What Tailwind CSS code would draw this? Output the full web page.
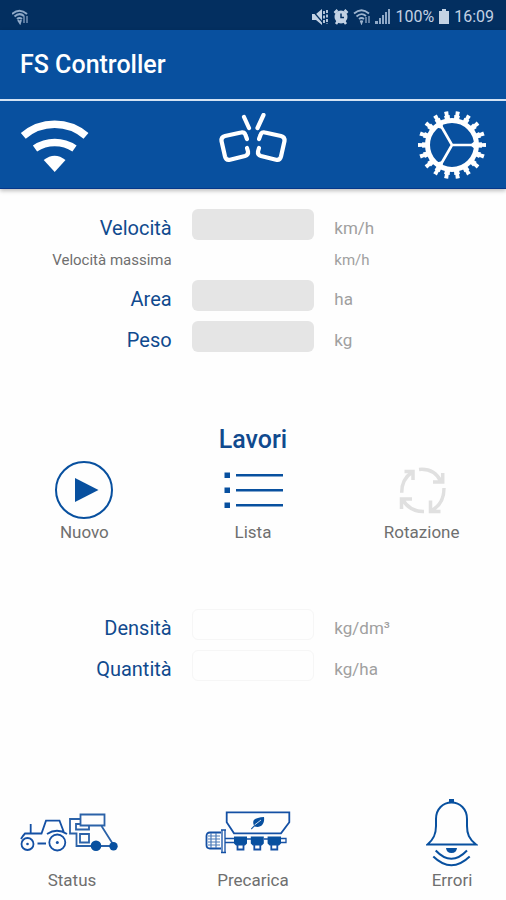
<!DOCTYPE html>
<html lang="it">
<head>
  <meta charset="UTF-8" />
  <meta name="viewport" content="width=device-width, initial-scale=1" />
  <title>FS Controller</title>
  <script src="https://cdn.jsdelivr.net/npm/@tailwindcss/browser@4"></script>
</head>
<body class="bg-[#fefefe] min-h-screen flex flex-col font-[Roboto,sans-serif]">

  <!-- Status bar -->
  <div class="h-[30px] shrink-0 bg-[#032f60] text-[#c3d2e4] pt-1 px-3 flex items-center justify-between">
    <svg class="w-4 h-4" viewBox="0 0 16 16" fill="none" stroke="#8fa9c8" stroke-width="2">
      <path d="M0 5 Q7.500 -1.500 15 5" /><path d="M2.500 7.500 Q7.500 3 12 7" /><path d="M5 10 Q7.500 8 10 10" />
      <path d="M6 11 L8 14 L9 11" /><path d="M12 14 V7 M15 14 V7" stroke-width="1.200" />
    </svg>
    <div class="flex items-center gap-1">
      <svg class="w-[18px] h-4" viewBox="0 0 18 16" fill="currentColor">
        <path d="M1 5 H5 L11 0 V16 L5 11 H1 Z" />
        <path d="M1 1 L13 15" stroke="#032f60" stroke-width="1.200" />
        <path d="M13 2 V14 M16 1 V15" stroke="currentColor" stroke-width="1.800" stroke-dasharray="3 1.500" />
      </svg>
      <svg class="w-4 h-4" viewBox="0 0 16 16" fill="currentColor">
        <circle cx="8" cy="8" r="6.500" />
        <path d="M1.500 4 L4.500 1 M14.500 4 L11.500 1 M3 15 L5 12 M13 15 L11 12" stroke="currentColor" stroke-width="2.500" />
        <path d="M8 4.500 V8.500 H11" fill="none" stroke="#032f60" stroke-width="1.500" />
      </svg>
      <svg class="w-[18px] h-4" viewBox="0 0 18 16" fill="none" stroke="#9db4cf" stroke-width="1.800">
        <path d="M1 4.500 Q8.500 -2 16 4.500" /><path d="M3.500 7.500 Q8.500 3 13 7" /><path d="M6 10 Q8.500 8 11 10" />
        <path d="M7.500 11.500 L8.500 14 L9.500 11.500" /><path d="M13 14 V8 M16 14 V7" stroke-width="1.200" />
      </svg>
      <svg class="w-4 h-4" viewBox="0 0 16 16" fill="#8fa9c8">
        <path d="M0 12 h3 v3 h-3 Z M4 9 h2 v6 h-2 Z M7 6 h2 v9 h-2 Z M10 3 h2 v12 h-2 Z M13 0 h2 v15 h-2 Z" />
      </svg>
      <span class="text-base">100%</span>
      <svg class="w-3 h-4" viewBox="0 0 12 16" fill="currentColor"><path d="M4 0 H8 V2 H11 V15 H1 V2 H4 Z" /></svg>
      <span class="text-base">16:09</span>
    </div>
  </div>

  <!-- Header -->
  <header class="shrink-0 bg-[#08509f] border-b border-[#05378a] shadow-[0_2px_4px_rgba(0,0,0,0.25)]">
    <div class="h-[71px] px-5 flex items-center border-b-2 border-[#d3e2f3]">
      <h1 class="text-white text-[25px] font-medium">FS Controller</h1>
    </div>
    <nav class="h-[87px] px-5 grid grid-cols-3 items-center">
      <button type="button" aria-label="Wi-Fi" class="justify-self-start">
        <svg class="w-[69px] h-[56px]" viewBox="0 0 69 56" fill="none" stroke="white" stroke-width="7.500">
          <path d="M3.300 18.800 A48 48 0 0 1 66 18.800" />
          <path d="M15 31.500 A35 35 0 0 1 54.500 31.500" />
          <path d="M23.700 43 Q34.700 34.500 45.500 43 L34.700 55 Z" fill="white" stroke="none" />
        </svg>
      </button>
      <button type="button" aria-label="Connessione" class="justify-self-center">
        <svg class="w-[70px] h-[64px]" viewBox="0 2 70 64" fill="none" stroke="white" stroke-width="4.200" stroke-linecap="round" stroke-linejoin="round">
          <path d="M29 28 L27.500 24 Q26.500 20.500 23 21.500 L7 25 Q3 26 3.500 30 L7 45.500 Q8 49.500 12 48.700 L27 45 Q30.500 44 30 40.500 L29 37" />
          <path d="M41 28 L42.500 24 Q43.500 20.500 47 21.500 L63 25 Q67 26 66.500 30 L63 45.500 Q62 49.500 58 48.700 L43 45 Q39.500 44 40 40.500 L41 37" />
          <path d="M26 6 L31 17 M45.500 4 L39.500 17" />
        </svg>
      </button>
      <button type="button" aria-label="Impostazioni" class="justify-self-end">
        <svg class="w-[68px] h-[68px]" viewBox="0 0 68 68" fill="none" stroke="white">
          <circle cx="34" cy="34" r="24.500" stroke-width="5" />
          <circle cx="34" cy="34" r="28" stroke-width="4" pathLength="360" stroke-dasharray="11 9" stroke-dashoffset="5.500" />
          <circle cx="34" cy="34" r="31.500" stroke-width="5" pathLength="360" stroke-dasharray="7 13" stroke-dashoffset="3.500" />
          <path d="M34 34 H57 M34 34 L22.500 14 M34 34 L22.500 54" stroke-width="2.600" />
          <path d="M52 34 L58 29 V39 Z M24.500 18 L17 16 L25 11 Z M24.500 50 L17 52 L25 57 Z" fill="white" stroke="none" />
        </svg>
      </button>
    </nav>
  </header>

  <main class="flex-1 flex flex-col pt-5 text-[#6f6f6f]">

    <!-- Readings -->
    <div class="grid grid-cols-[7fr_5fr_7fr] gap-x-5 gap-y-[10px] items-center">
      <label for="velocita" class="text-right text-xl leading-[23px] pt-2 text-[#104a8e]">Velocità</label>
      <input id="velocita" type="text" readonly class="w-full h-[31px] rounded-md bg-[#e5e5e5] px-2" />
      <span class="text-[17px] leading-[23px] pt-2 text-[#a0a0a0]">km/h</span>

      <span class="text-right text-[15px] leading-5">Velocità massima</span>
      <span></span>
      <span class="text-[15px] leading-5 text-[#a0a0a0]">km/h</span>

      <label for="area" class="text-right text-xl leading-[23px] pt-2 text-[#104a8e]">Area</label>
      <input id="area" type="text" readonly class="w-full h-[31px] rounded-md bg-[#e5e5e5] px-2" />
      <span class="text-[17px] leading-[23px] pt-2 text-[#a0a0a0]">ha</span>

      <label for="peso" class="text-right text-xl leading-[23px] pt-2 text-[#104a8e]">Peso</label>
      <input id="peso" type="text" readonly class="w-full h-[31px] rounded-md bg-[#e5e5e5] px-2" />
      <span class="text-[17px] leading-[23px] pt-2 text-[#a0a0a0]">kg</span>
    </div>

    <!-- Jobs -->
    <section class="mt-[72px]">
      <h2 class="text-center text-[25px] leading-8 font-medium text-[#104a8e]">Lavori</h2>
      <div class="mt-1 grid grid-cols-3 text-[17px] leading-6">
        <button type="button" class="flex flex-col items-center">
          <svg class="w-[60px] h-[60px]" viewBox="0 0 60 60">
            <circle cx="30" cy="30" r="28" fill="none" stroke="#08509f" stroke-width="2" />
            <path d="M21 18 L44.500 30 L21 42 Z" fill="#08509f" />
          </svg>
          Nuovo
        </button>
        <button type="button" class="flex flex-col items-center">
          <svg class="w-[60px] h-[60px]" viewBox="0 0 60 60" fill="#08509f">
            <path d="M1.500 12.500 h5.500 v5.500 h-5.500 Z M1.500 27.500 h5.500 v5.500 h-5.500 Z M1.500 42.500 h5.500 v5.500 h-5.500 Z" />
            <path d="M13 14 h47 v2.500 h-47 Z M13 29 h47 v2.500 h-47 Z M13 44 h47 v2.500 h-47 Z" />
          </svg>
          Lista
        </button>
        <button type="button" class="flex flex-col items-center">
          <svg class="w-[60px] h-[60px]" viewBox="-6 -6 60 60" fill="none" stroke="#e0e0e0" stroke-width="3.500">
            <path d="M3.700 26.700 Q3.500 13 14.700 5.700 M6.500 5.500 H15 V14" />
            <path d="M21 3.500 Q36 2 43 15.500 M44.700 7 V16 H35" />
            <path d="M46 22 Q46 38 33.500 44.500 M32.500 34.500 V45.500 H42.500" />
            <path d="M26 45.500 Q12 46 4.500 33.500 M3.500 43 V33 H14" />
          </svg>
          Rotazione
        </button>
      </div>
    </section>

    <!-- Settings -->
    <div class="mt-[65px] grid grid-cols-[7fr_5fr_7fr] gap-x-5 gap-y-[10px] items-center">
      <label for="densita" class="text-right text-xl leading-[23px] pt-2 text-[#104a8e]">Densità</label>
      <input id="densita" type="text" class="w-full h-[31px] rounded-md border border-[#f6f6f6] px-2" />
      <span class="text-[17px] leading-[23px] pt-2 text-[#a0a0a0]">kg/dm³</span>

      <label for="quantita" class="text-right text-xl leading-[23px] pt-2 text-[#104a8e]">Quantità</label>
      <input id="quantita" type="text" class="w-full h-[31px] rounded-md border border-[#f6f6f6] px-2" />
      <span class="text-[17px] leading-[23px] pt-2 text-[#a0a0a0]">kg/ha</span>
    </div>

    <!-- Bottom actions -->
    <footer class="mt-auto px-5 pb-2 grid grid-cols-3 items-end text-[17px] leading-6">
      <button type="button" class="justify-self-start w-[104px] flex flex-col items-center gap-[14px]">
        <svg class="w-[104px] h-[42px]" viewBox="0 0 104 42" fill="none" stroke="#1450a4" stroke-width="1.800">
          <circle cx="7.500" cy="32" r="6" /><circle cx="7.500" cy="32" r="1.300" fill="#1450a4" stroke="none" />
          <circle cx="37.300" cy="30.500" r="8" /><circle cx="37.300" cy="30.500" r="1.500" fill="#1450a4" stroke="none" />
          <path d="M17.500 31.500 H26 M10.700 12 V21 M1 27 Q3 23.500 5 21.500 H21.500 L26 8.700 H39.500 L44 20.500 M27 22 Q37 15.500 47 22" />
          <g stroke="#2b62a8">
            <path d="M60.500 2.500 H84.500 V13.500 H60.500 Z" />
            <path d="M60 7 H50 V21.500 H56.500 V34 H93 M60 12 H56 V17.500 H69 V14 M60 22 H69 V30.500 H60 Z M81.500 14 L93.500 33" />
          </g>
          <circle cx="76" cy="33.700" r="5.300" fill="#08509f" stroke="none" />
          <circle cx="93.500" cy="34.300" r="4.200" fill="#08509f" stroke="none" />
        </svg>
        Status
      </button>
      <button type="button" class="justify-self-center flex flex-col items-center gap-[14px]">
        <svg class="w-[96px] h-[44px]" viewBox="0 0 96 44" fill="none" stroke="#1450a4" stroke-width="1.800">
          <path d="M21.700 2.300 H84.300 V12.300 L76 23.300 H29 L21.700 12.300 Z" />
          <path d="M46 18.500 L49 15.500 C46 9 52 7.500 59 7 C60 14 56 18.500 49.500 16.500 L46.500 19.500 Z" fill="#08509f" stroke="none" />
          <path d="M49.500 15 L56 10" stroke="#fefefe" stroke-width="0.800" />
          <path d="M29 26.500 h13 v7 l-2 2 h-9 l-2 -2 Z M45.800 26.500 h13 v7 l-2 2 h-9 l-2 -2 Z M62.600 26.500 h13.400 v7 l-2 2 h-9.400 l-2 -2 Z" fill="#08509f" stroke="none" />
          <path d="M32.500 34 V39.500 H38.500 V34 M49.300 34 V39.500 H55.300 V34 M66.300 34 V39.500 H72.300 V34" />
          <path d="M20 28.500 H29 M20 32.500 H29 M42 29 H46 M59 29 H63 M76 28.500 H81 V32.500 H76 M17 20 V42.500 M20 20 V42.500 M16 20 H21 M16 42.500 H21" stroke-width="1.300" />
          <path d="M16 22.500 H5 Q1.500 22.500 1.500 26 V35 Q1.500 38.500 5 38.500 H16" />
          <path d="M3 26 H15 M3 29 H15 M3 32 H15 M3 35 H15 M6 23 V38 M11 23 V38" stroke="#4a7ab8" stroke-width="1.200" />
        </svg>
        Precarica
      </button>
      <button type="button" class="justify-self-end w-[68px] flex flex-col items-center">
        <svg class="w-[52px] h-[71px]" viewBox="0 0 52 71" fill="none" stroke="#08509f" stroke-width="2">
          <path d="M23 2 h5 v4 h-5 Z" fill="#08509f" stroke="none" />
          <path d="M1.500 47.500 H50 C43 42 41 37 41 29 V22 C41 12 34 5.500 25.500 5.500 C17 5.500 10 12 10 22 V29 C10 37 8 42 1.500 47.500 Z" />
          <path d="M20 51 H31 Q30.500 56 25.500 56 Q20.500 56 20 51 Z" fill="#08509f" stroke="none" />
          <path d="M9.700 53.500 Q25.300 70 41 53.500 M7.300 59.500 Q25.300 77 43.700 59.500" />
        </svg>
        Errori
      </button>
    </footer>
  </main>

</body>
</html>
